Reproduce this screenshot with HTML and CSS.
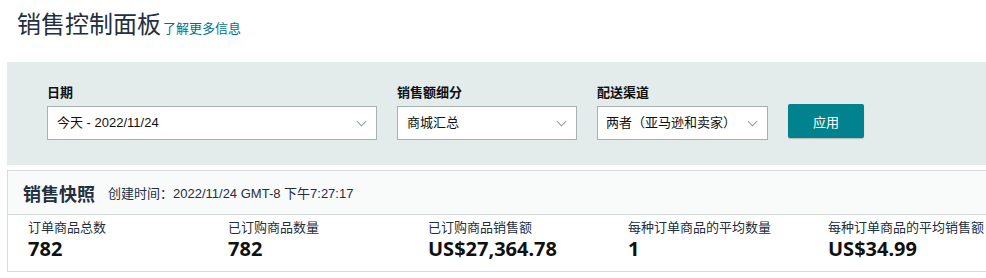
FILE: index.html
```html
<!doctype html>
<html lang="zh-CN">
<head>
	<meta charset="utf-8">
	<title>销售控制面板</title>
	<link rel="stylesheet" href="styles.css">
</head>
<body>
	<div class="page">
		<h1 class="page-title">销售控制面板<a class="page-link" href="#">了解更多信息</a></h1>

		<form class="filters">
			<label class="filter filter-date">
				<span class="filter-label">日期</span>
				<span class="select">今天 - 2022/11/24</span>
			</label>
			<label class="filter filter-breakdown">
				<span class="filter-label">销售额细分</span>
				<span class="select">商城汇总</span>
			</label>
			<label class="filter filter-channel">
				<span class="filter-label">配送渠道</span>
				<span class="select">两者（亚马逊和卖家）</span>
			</label>
			<button type="button" class="apply">应用</button>
		</form>

		<div class="snapshot">
			<div class="snapshot-head">
				<h2 class="snapshot-title">销售快照</h2>
				<span class="snapshot-time">创建时间：2022/11/24 GMT-8 下午7:27:17</span>
			</div>
			<div class="snapshot-metrics">
				<div class="metric">
					<div class="metric-label">订单商品总数</div>
					<div class="metric-value">782</div>
				</div>
				<div class="metric">
					<div class="metric-label">已订购商品数量</div>
					<div class="metric-value">782</div>
				</div>
				<div class="metric">
					<div class="metric-label">已订购商品销售额</div>
					<div class="metric-value">US$27,364.78</div>
				</div>
				<div class="metric">
					<div class="metric-label">每种订单商品的平均数量</div>
					<div class="metric-value">1</div>
				</div>
				<div class="metric">
					<div class="metric-label">每种订单商品的平均销售额</div>
					<div class="metric-value">US$34.99</div>
				</div>
			</div>
		</div>
	</div>
</body>
</html>
```

FILE: styles.css
```css
* {
	box-sizing: border-box;
}
html, body {
	margin: 0;
	overflow: hidden;
}
body {
	font-family: "Liberation Sans", "Noto Sans CJK SC", sans-serif;
	color: #0f1111;
	background: #fff;
}

.page {
	width: 1010px;
	padding-left: 7px;
}

.page-title {
	margin: 0;
	padding: 10px 0 0 10px;
	height: 62px;
	font-size: 24px;
	font-weight: 400;
	line-height: 30px;
	color: #232f3e;
}
.page-link {
	font-size: 13px;
	color: #007185;
	text-decoration: none;
	margin-left: 2px;
}

/* filter band */
.filters {
	display: flex;
	align-items: flex-end;
	gap: 20px;
	background: #e3ebeb;
	padding: 22px 0 25px 40px;
}
.filter {
	display: flex;
	flex-direction: column;
}
.filter-label {
	font-size: 13px;
	font-weight: 700;
	line-height: 18px;
	margin-bottom: 4px;
}
.select {
	position: relative;
	height: 34px;
	line-height: 32px;
	border: 1px solid #a6b2b2;
	background: #fff;
	font-size: 13px;
	padding: 0 30px 0 9px;
	white-space: nowrap;
}
.select::after {
	content: "";
	position: absolute;
	right: 11px;
	top: 11px;
	width: 6px;
	height: 6px;
	border-right: 1.5px solid #8f9c9c;
	border-bottom: 1.5px solid #8f9c9c;
	transform: rotate(45deg);
}
.filter-date .select { width: 330px; }
.filter-breakdown .select { width: 180px; }
.filter-channel .select { width: 171px; padding-left: 8px; }

.apply {
	width: 76px;
	height: 34px;
	margin-bottom: 2px;
	border: 0;
	border-radius: 2px;
	background: #00838f;
	color: #fff;
	font-family: inherit;
	font-size: 13px;
	box-shadow: 0 1px 1px rgba(0, 0, 0, .2);
}

/* snapshot card */
.snapshot {
	margin-top: 5px;
	border: 1px solid #d5dbdb;
	border-right: 0;
}
.snapshot-head {
	display: flex;
	align-items: center;
	height: 44px;
	padding-left: 15px;
	background: #f9fafa;
	border-bottom: 1px solid #d5dbdb;
}
.snapshot-title {
	margin: 0 13px 0 0;
	font-size: 18px;
	font-weight: 700;
	color: #232f3e;
}
.snapshot-time {
	font-size: 13px;
	color: #232f3e;
}
.snapshot-metrics {
	display: flex;
	padding: 4px 0 10px 20px;
}
.metric {
	width: 200px;
	flex: none;
}
.metric-label {
	font-size: 13px;
	line-height: 18px;
	color: #232f3e;
}
.metric-value {
	font-family: "Noto Sans", "Noto Sans CJK SC", sans-serif;
	font-size: 20px;
	font-weight: 700;
	line-height: 24px;
	color: #0f1111;
}
```
